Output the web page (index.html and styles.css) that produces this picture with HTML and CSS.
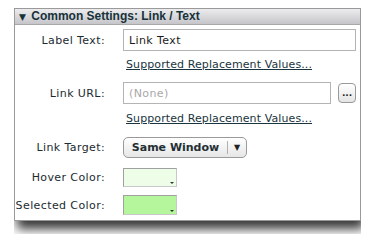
FILE: index.html
```html
<html lang="en">
  <head>
    <meta charset="UTF-8" />
    <title>Common Settings</title>
    <link rel="stylesheet" href="styles.css">
  </head>
  <body>
    <div class="panel">
      <div class="panel-header">
        <span class="caret">&#9660;</span> Common Settings: Link / Text
      </div>
      <div class="panel-body">
        <div class="row row-field">
          <label class="row-label" for="label-text">Label Text:</label>
          <input id="label-text" class="text-field" type="text" value="Link Text" />
        </div>
        <div class="row row-link">
          <span></span>
          <a href="#" class="values-link">Supported Replacement Values...</a>
        </div>
        <div class="row row-field">
          <label class="row-label" for="link-url">Link URL:</label>
          <div class="url-control">
            <input id="link-url" class="text-field" type="text" placeholder="(None)" />
            <button class="dots-btn">...</button>
          </div>
        </div>
        <div class="row row-link second">
          <span></span>
          <a href="#" class="values-link">Supported Replacement Values...</a>
        </div>
        <div class="row row-target">
          <span class="row-label">Link Target:</span>
          <div class="select-btn">
            <span class="select-text">Same Window</span>
            <span class="select-arrow">&#9660;</span>
          </div>
        </div>
        <div class="row row-color">
          <span class="row-label">Hover Color:</span>
          <div class="swatch hover"><span class="swatch-arrow"></span></div>
        </div>
        <div class="row row-color last">
          <span class="row-label">Selected Color:</span>
          <div class="swatch selected"><span class="swatch-arrow"></span></div>
        </div>
      </div>
    </div>
  </body>
</html>
```

FILE: styles.css
```css
body {
  margin: 8px 14px;
  background: #fff;
  font-family: "DejaVu Sans", sans-serif;
  font-size: 11px;
  color: #1b2b30;
}

.panel {
  width: 345px;
  border: 1px solid #9a9a9a;
  background: #fff;
  box-shadow: 3px 8px 10px rgba(0, 0, 0, 0.78);
}

.panel-header {
  height: 15px;
  line-height: 15px;
  padding-left: 4px;
  background: linear-gradient(to bottom, #ececee, #c6c6ca);
  border-bottom: 1px solid #a8a8a8;
  font-family: "Liberation Sans", sans-serif;
  font-weight: bold;
  font-size: 12px;
  color: #17323a;
}

.caret {
  font-family: "DejaVu Sans", sans-serif;
  font-size: 9px;
  margin-right: 2px;
}

.panel-body {
  padding: 4px 4px 5px 0;
}

.row {
  display: grid;
  grid-template-columns: 108px 1fr;
  align-items: center;
}

.row-field {
  height: 22px;
}

.row-label {
  text-align: right;
  padding-right: 18px;
  letter-spacing: 0.4px;
}

.text-field {
  height: 22px;
  border: 1px solid #b4b4b4;
  padding: 0 5px;
  font-family: "DejaVu Sans", sans-serif;
  font-size: 11px;
  letter-spacing: 0.4px;
  color: #1a1a1a;
  width: 100%;
  box-sizing: border-box;
}

.text-field::placeholder {
  color: #a8a8a8;
}

.row-link {
  height: 31px;
  align-items: start;
  box-sizing: border-box;
  padding-top: 7px;
  line-height: 13px;
}

.row-link.second {
  height: 33px;
  padding-top: 8px;
}

.values-link {
  color: #1a3540;
  letter-spacing: 0.1px;
  padding-left: 3px;
}

.url-control {
  display: flex;
  align-items: center;
  gap: 7px;
}

.dots-btn {
  width: 20px;
  height: 20px;
  padding: 0;
  border: 1px solid #9a9a9a;
  border-radius: 4px;
  background: linear-gradient(to bottom, #fff, #e4e4e4);
  font-family: "DejaVu Sans", sans-serif;
  font-weight: bold;
  font-size: 9px;
  line-height: 12px;
  color: #222;
}

.row-target {
  height: 21px;
}

.select-btn {
  width: 124px;
  height: 21px;
  box-sizing: border-box;
  border: 1px solid #9a9a9a;
  border-radius: 5px;
  background: linear-gradient(to bottom, #ffffff, #e6e6e6);
  display: flex;
  align-items: center;
}

.select-text {
  width: 103px;
  text-align: center;
  font-weight: bold;
  font-size: 11px;
  color: #1f2f33;
  border-right: 1px solid #b0b0b0;
  line-height: 13px;
}

.select-arrow {
  flex: 1;
  text-align: center;
  font-size: 8px;
  color: #222;
}

.row-color {
  height: 19px;
  margin-top: 10px;
}

.row-color.last {
  height: 20px;
  margin-top: 8px;
}

.swatch {
  width: 54px;
  height: 100%;
  box-sizing: border-box;
  border: 1px solid #a0a0a0;
  border-right-color: #c8c8c8;
  border-bottom-color: #c8c8c8;
  position: relative;
}

.swatch.hover {
  background: #eefde8;
}

.swatch.selected {
  background: #b5f59c;
}

.swatch-arrow {
  position: absolute;
  right: 2px;
  bottom: 2px;
  border-left: 2px solid transparent;
  border-right: 2px solid transparent;
  border-top: 2px solid #333;
}
```
